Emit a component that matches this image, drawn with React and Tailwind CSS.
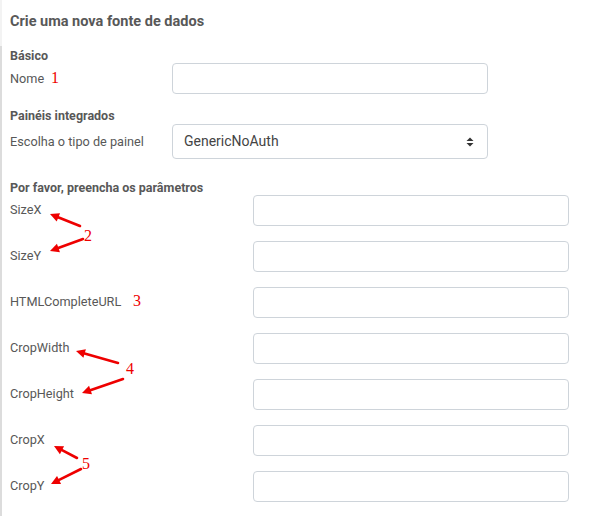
import React from "react";

function Arrow({ x1, y1, x2, y2 }) {
  const dx = x2 - x1;
  const dy = y2 - y1;
  const len = Math.hypot(dx, dy);
  const ux = dx / len;
  const uy = dy / len;
  const hl = 9;
  const hw = 4.5;
  const bx = x2 - ux * hl;
  const by = y2 - uy * hl;
  const p1 = `${x2},${y2}`;
  const p2 = `${bx - uy * hw},${by + ux * hw}`;
  const p3 = `${bx + uy * hw},${by - ux * hw}`;
  return (
    <g>
      <line x1={x1} y1={y1} x2={bx + ux * 1} y2={by + uy * 1} stroke="#ee0000" strokeWidth="2.6" strokeLinecap="round" />
      <polygon points={`${p1} ${p2} ${p3}`} fill="#ee0000" />
    </g>
  );
}

function Num({ x, y, children }) {
  return (
    <text x={x} y={y} fill="#ee0000" fontSize="16" fontFamily="'Liberation Serif', serif">
      {children}
    </text>
  );
}

const params = ["SizeX", "SizeY", "HTMLCompleteURL", "CropWidth", "CropHeight", "CropX", "CropY"];

export default function App() {
  return (
    <div className="relative flex min-h-[516px] w-[592px] bg-white font-['Roboto',sans-serif] text-[#585858]">
      <div className="flex w-[2px] flex-col">
        <div className="h-[46px] bg-[#f3f3f3]" />
        <div className="flex-1 bg-[#dcdcdc]" />
      </div>
      <div className="flex-1 pl-[8px] pt-[12px]">
        <h1 className="text-[14.5px] font-bold leading-[20px]">Crie uma nova fonte de dados</h1>

        <h2 className="mt-[17px] text-[12.5px] font-bold leading-[14px]">Básico</h2>
        <div className="flex items-center">
          <label className="w-[162px] text-[12.7px] leading-[18px]">Nome</label>
          <div className="h-[31px] w-[316px] rounded-[4px] border border-[#ced4da] bg-white" />
        </div>

        <h2 className="mt-[15px] text-[12.5px] font-bold leading-[14px]">Painéis integrados</h2>
        <div className="mt-[1px] flex items-center">
          <label className="w-[162px] text-[12.7px] leading-[18px]">Escolha o tipo de painel</label>
          <div className="flex h-[35px] w-[316px] items-center justify-between rounded-[4px] border border-[#ced4da] bg-white pl-[11px] pr-[13px]">
            <span className="text-[14px] text-[#444]">GenericNoAuth</span>
            <svg width="8" height="10" viewBox="0 0 8 10">
              <polygon points="4,0.5 7.5,4 0.5,4" fill="#333" />
              <polygon points="0.5,6 7.5,6 4,9.5" fill="#333" />
            </svg>
          </div>
        </div>

        <h2 className="mt-[22px] text-[12.5px] font-bold leading-[14px]">Por favor, preencha os parâmetros</h2>
        <div className="flex flex-col gap-[15px]">
          {params.map((p) => (
            <div key={p} className="flex items-center">
              <label className="w-[243px] pb-[2px] text-[12.7px] leading-[18px]">{p}</label>
              <div className="h-[31px] w-[316px] rounded-[4px] border border-[#ced4da] bg-white" />
            </div>
          ))}
        </div>
      </div>

      <svg className="pointer-events-none absolute left-0 top-0" width="592" height="516">
        <Num x="51" y="83">1</Num>
        <Arrow x1={80} y1={226} x2={50} y2={214} />
        <Arrow x1={83} y1={239} x2={50} y2={251} />
        <Num x="84" y="241">2</Num>
        <Num x="133" y="306">3</Num>
        <Arrow x1={118} y1={363} x2={76} y2={351} />
        <Arrow x1={123} y1={379} x2={82} y2={393} />
        <Num x="126" y="374">4</Num>
        <Arrow x1={77} y1={458} x2={54} y2={446} />
        <Arrow x1={81} y1={469} x2={51} y2={484} />
        <Num x="82" y="469">5</Num>
      </svg>
    </div>
  );
}
